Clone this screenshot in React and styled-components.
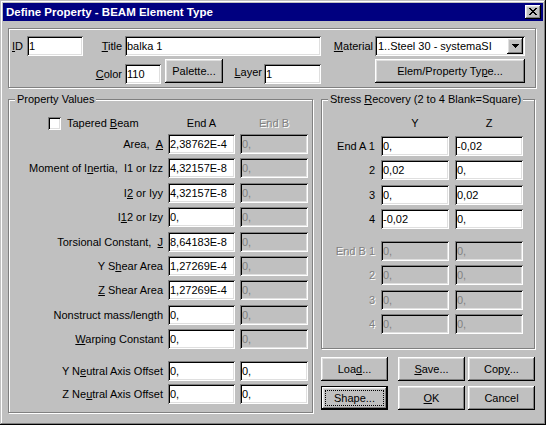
import styled, { createGlobalStyle, css } from "styled-components";

const GlobalStyle = createGlobalStyle`
  html, body {
    margin: 0;
    padding: 0;
    background: #c0c0c0;
    overflow: hidden;
  }
  body {
    font-family: "Liberation Sans", Arial, sans-serif;
    font-size: 11px;
    color: #000;
  }
`;

const raised = css`
  box-shadow: inset -1px -1px #000, inset 1px 1px #fff, inset -2px -2px #808080,
    inset 2px 2px #dfdfdf;
`;

const sunken = css`
  box-shadow: inset 1px 1px #808080, inset -1px -1px #fff, inset 2px 2px #000,
    inset -2px -2px #dfdfdf;
`;

const etched = css`
  box-sizing: border-box;
  border: 1px solid #808080;
  box-shadow: inset 1px 1px #fff, 1px 1px #fff;
`;

const Window = styled.div`
  width: 546px;
  height: 425px;
  box-sizing: border-box;
  padding: 3px;
  background: #c0c0c0;
  box-shadow: inset -1px -1px #000, inset 1px 1px #c0c0c0, inset -2px -2px #808080,
    inset 2px 2px #fff;
`;

const TitleBar = styled.div`
  height: 18px;
  display: flex;
  align-items: center;
  justify-content: space-between;
  padding: 0 2px 0 3px;
  background: #000080;
  color: #fff;
`;

const TitleText = styled.span`
  font-weight: bold;
  font-size: 11.5px;
  white-space: nowrap;
`;

const CloseButton = styled.div`
  width: 16px;
  height: 14px;
  box-sizing: border-box;
  display: flex;
  align-items: center;
  justify-content: center;
  padding: 0 1px 1px 0;
  background: #c0c0c0;
  ${raised}
`;

const Body = styled.div`
  padding: 7px 7px 0 5px;
`;

const TopGroup = styled.div`
  ${etched}
  width: 528px;
  height: 60px;
  padding: 7px 0 0 3px;
  display: grid;
  grid-template-columns: 15px 56px 42px 196px 54px 150px;
  grid-template-rows: 20px 25px;
  row-gap: 3px;
`;

const TopLabel = styled.span`
  grid-column: ${(p) => p.$col || "auto"};
  align-self: ${(p) => (p.$bottom ? "end" : "center")};
  flex: ${(p) => (p.$grow ? 1 : "none")};
  line-height: 20px;
  white-space: nowrap;
  text-align: ${(p) => (p.$left ? "left" : "right")};
  padding-right: ${(p) => (p.$left ? 0 : p.$pad ?? 3)}px;
`;

const Accel = styled.u`
  text-decoration: underline;
  text-underline-offset: 1px;
`;

const Field = styled.input`
  box-sizing: border-box;
  width: ${(p) => (p.$w ? `${p.$w}px` : "100%")};
  height: 20px;
  margin: 0;
  padding: 0 2px;
  border: none;
  outline: none;
  font: 11px "Liberation Sans", Arial, sans-serif;
  color: #000;
  background: #fff;
  ${sunken}
  &:disabled {
    background: #c0c0c0;
    color: #808080;
    -webkit-text-fill-color: #808080;
    opacity: 1;
  }
`;

const Combo = styled.div`
  box-sizing: border-box;
  height: 20px;
  display: flex;
  align-items: center;
  padding: 2px 2px 2px 3px;
  background: #fff;
  ${sunken}
`;

const ComboText = styled.span`
  flex: 1;
  white-space: nowrap;
`;

const DropButton = styled.div`
  width: 16px;
  height: 16px;
  box-sizing: border-box;
  display: flex;
  align-items: center;
  justify-content: center;
  background: #c0c0c0;
  ${raised}
`;

const Inline = styled.div`
  display: flex;
  align-items: flex-end;
`;

const Button = styled.div`
  box-sizing: border-box;
  width: ${(p) => p.$w || 67}px;
  height: 24px;
  display: flex;
  align-items: center;
  justify-content: center;
  grid-column: ${(p) => p.$col || "auto"};
  align-self: ${(p) => (p.$top ? "flex-start" : "auto")};
  margin-left: ${(p) => p.$ml || 0}px;
  background: #c0c0c0;
  white-space: nowrap;
  ${(p) =>
    p.$default
      ? css`
          box-shadow: inset 0 0 0 1px #000, inset -2px -2px #000, inset 2px 2px #fff,
            inset -3px -3px #808080, inset 3px 3px #dfdfdf;
        `
      : raised}
`;

const FocusRing = styled.span`
  flex: 1;
  align-self: stretch;
  margin: 4px;
  border: 1px dotted #000;
  display: flex;
  align-items: center;
  justify-content: center;
`;

const MainRow = styled.div`
  display: flex;
  gap: 8px;
  margin-top: 11px;
`;

const Group = styled.div`
  ${etched}
  position: relative;
  width: ${(p) => p.$w}px;
  height: ${(p) => p.$h}px;
  padding-top: 14px;
`;

const Legend = styled.span`
  position: absolute;
  top: -7px;
  left: 6px;
  padding: 0 2px;
  line-height: 13px;
  background: #c0c0c0;
  white-space: nowrap;
`;

const Rows = styled.div`
  display: flex;
  flex-direction: column;
  gap: ${(p) => p.$gap ?? 4.4}px;
  margin-top: ${(p) => p.$mt || 0}px;
`;

const PropRow = styled.div`
  display: grid;
  grid-template-columns: 154px 67px 68px;
  column-gap: 5px;
  align-items: center;
  height: ${(p) => p.$h || 20}px;
  margin-bottom: ${(p) => p.$mb || 0}px;
`;

const StressRow = styled.div`
  display: grid;
  grid-template-columns: 53px 68px 68px;
  column-gap: 6px;
  align-items: center;
  height: ${(p) => p.$h || 20}px;
  margin-bottom: ${(p) => p.$mb || 0}px;
`;

const RowLabel = styled.span`
  text-align: ${(p) => p.$align || "right"};
  white-space: nowrap;
  color: ${(p) => (p.$off ? "#808080" : "#000")};
  text-shadow: ${(p) => (p.$off ? "1px 1px 0 #fff" : "none")};
`;

const CheckLabel = styled.label`
  display: flex;
  align-items: center;
  gap: 6px;
  padding-left: 39px;
  white-space: nowrap;
`;

const CheckBox = styled.span`
  width: 13px;
  height: 13px;
  box-sizing: border-box;
  background: #fff;
  ${sunken}
`;

const RightColumn = styled.div`
  display: flex;
  flex-direction: column;
  width: 214px;
`;

const ButtonGrid = styled.div`
  display: grid;
  grid-template-columns: 67px 74px 67px;
  column-gap: 3px;
  row-gap: 5px;
  justify-items: end;
  margin-top: 8px;
`;

const CloseGlyph = () => (
  <svg width="8" height="7" viewBox="0 0 8 7" shapeRendering="crispEdges">
    <path
      fill="#000"
      d="M0 0h2v1H0zM6 0h2v1H6zM1 1h2v1H1zM5 1h2v1H5zM2 2h4v1H2zM3 3h2v1H3zM2 4h4v1H2zM1 5h2v1H1zM5 5h2v1H5zM0 6h2v1H0zM6 6h2v1H6z"
    />
  </svg>
);

const ArrowGlyph = () => (
  <svg width="7" height="4" viewBox="0 0 7 4" shapeRendering="crispEdges">
    <path fill="#000" d="M0 0h7v1H0zM1 1h5v1H1zM2 2h3v1H2zM3 3h1v1H3z" />
  </svg>
);

const properties = [
  { label: <>Area, {"\u00a0"}<Accel>A</Accel></>, a: "2,38762E-4" },
  { label: <>Moment of I<Accel>n</Accel>ertia, {"\u00a0"}I1 or Izz</>, a: "4,32157E-8" },
  { label: <>I<Accel>2</Accel> or Iyy</>, a: "4,32157E-8" },
  { label: <>I<Accel>1</Accel>2 or Izy</>, a: "0," },
  { label: <>Torsional Constant, {"\u00a0"}<Accel>J</Accel></>, a: "8,64183E-8" },
  { label: <>Y S<Accel>h</Accel>ear Area</>, a: "1,27269E-4" },
  { label: <><Accel>Z</Accel> Shear Area</>, a: "1,27269E-4" },
  { label: <>Nonstruct mass/length</>, a: "0," },
  { label: <><Accel>W</Accel>arping Constant</>, a: "0," },
];

const offsets = [
  { label: <>Y N<Accel>e</Accel>utral Axis Offset</>, a: "0,", b: "0," },
  { label: <>Z Ne<Accel>u</Accel>tral Axis Offset</>, a: "0,", b: "0," },
];

const endA = [
  ["End A 1", "0,", "-0,02"],
  ["2", "0,02", "0,"],
  ["3", "0,", "0,02"],
  ["4", "-0,02", "0,"],
];

const endB = [
  ["End B 1", "0,", "0,"],
  ["2", "0,", "0,"],
  ["3", "0,", "0,"],
  ["4", "0,", "0,"],
];

export default function App() {
  return (
    <>
      <GlobalStyle />
      <Window>
        <TitleBar>
          <TitleText>Define Property - BEAM Element Type</TitleText>
          <CloseButton>
            <CloseGlyph />
          </CloseButton>
        </TitleBar>
        <Body>
          <TopGroup>
            <TopLabel $left>
              <Accel>I</Accel>D
            </TopLabel>
            <Field value="1" readOnly />
            <TopLabel>
              <Accel>T</Accel>itle
            </TopLabel>
            <Field value="balka 1" readOnly />
            <TopLabel $pad={2}>
              <Accel>M</Accel>aterial
            </TopLabel>
            <Combo>
              <ComboText>1..Steel 30 - systemaSI</ComboText>
              <DropButton>
                <ArrowGlyph />
              </DropButton>
            </Combo>

            <TopLabel $col={3} $bottom>
              <Accel>C</Accel>olor
            </TopLabel>
            <Inline>
              <Field $w={36} value="110" readOnly />
              <Button $w={58} $ml={4} $top>
                Palette...
              </Button>
              <TopLabel $grow $pad={2}>
                <Accel>L</Accel>ayer
              </TopLabel>
              <Field $w={57} value="1" readOnly />
            </Inline>
            <Button $w={150} $col={6}>
              Elem/Property Ty<Accel>p</Accel>e...
            </Button>
          </TopGroup>

          <MainRow>
            <Group $w={305} $h={314}>
              <Legend>Property Values</Legend>
              <PropRow $h={18} $mb={2}>
                <CheckLabel>
                  <CheckBox />
                  <span>
                    Tapered <Accel>B</Accel>eam
                  </span>
                </CheckLabel>
                <RowLabel $align="center">End A</RowLabel>
                <RowLabel $align="center" $off>
                  End B
                </RowLabel>
              </PropRow>
              <Rows>
                {properties.map((p, i) => (
                  <PropRow key={i}>
                    <RowLabel>{p.label}</RowLabel>
                    <Field value={p.a} readOnly />
                    <Field value="0," disabled readOnly />
                  </PropRow>
                ))}
              </Rows>
              <Rows $mt={11.8} $gap={3}>
                {offsets.map((p, i) => (
                  <PropRow key={i}>
                    <RowLabel>{p.label}</RowLabel>
                    <Field value={p.a} readOnly />
                    <Field value={p.b} readOnly />
                  </PropRow>
                ))}
              </Rows>
            </Group>

            <RightColumn>
              <Group $w={214} $h={250}>
                <Legend>
                  Stress <Accel>R</Accel>ecovery (2 to 4 Blank=Square)
                </Legend>
                <StressRow $h={18} $mb={4}>
                  <span />
                  <RowLabel $align="center">Y</RowLabel>
                  <RowLabel $align="center">Z</RowLabel>
                </StressRow>
                <Rows>
                  {endA.map(([label, y, z], i) => (
                    <StressRow key={i}>
                      <RowLabel>{label}</RowLabel>
                      <Field value={y} readOnly />
                      <Field value={z} readOnly />
                    </StressRow>
                  ))}
                </Rows>
                <Rows $mt={11.8}>
                  {endB.map(([label, y, z], i) => (
                    <StressRow key={i}>
                      <RowLabel $off>{label}</RowLabel>
                      <Field value={y} disabled readOnly />
                      <Field value={z} disabled readOnly />
                    </StressRow>
                  ))}
                </Rows>
              </Group>
              <ButtonGrid>
                <Button>
                  Loa<Accel>d</Accel>...
                </Button>
                <Button>
                  <Accel>S</Accel>ave...
                </Button>
                <Button>
                  Cop<Accel>y</Accel>...
                </Button>
                <Button $default>
                  <FocusRing>Shape...</FocusRing>
                </Button>
                <Button>
                  <Accel>O</Accel>K
                </Button>
                <Button>Cancel</Button>
              </ButtonGrid>
            </RightColumn>
          </MainRow>
        </Body>
      </Window>
    </>
  );
}
